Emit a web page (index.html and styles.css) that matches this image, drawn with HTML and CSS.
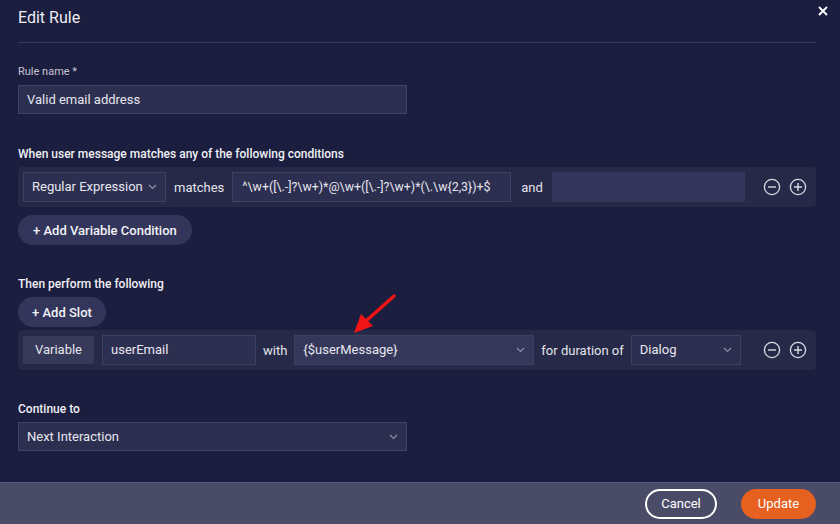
FILE: index.html
```html
<!DOCTYPE html>
<html>
<head>
<meta charset="utf-8">
<link rel="stylesheet" href="styles.css">
</head>
<body>
<div class="dialog">
  <div class="content">
    <header class="header">
      <h1 class="title">Edit Rule</h1>
      <button class="close" aria-label="Close">
        <svg width="10" height="10" viewBox="0 0 10 10"><path d="M1 1L9 9M9 1L1 9" stroke="#fff" stroke-width="1.8" fill="none"/></svg>
      </button>
    </header>

    <label class="field-label">Rule name *</label>
    <div class="input wide name-input">Valid email address</div>

    <h2 class="section-label first">When user message matches any of the following conditions</h2>
    <div class="row">
      <div class="select sel-type"><span>Regular Expression</span><svg class="chev" width="9" height="6" viewBox="0 0 9 6"><path d="M1 1L4.5 4.5L8 1" stroke="#8d8fa9" stroke-width="1.2" fill="none"/></svg></div>
      <span class="word">matches</span>
      <div class="input regex">^\w+([\.-]?\w+)*@\w+([\.-]?\w+)*(\.\w{2,3})+$</div>
      <span class="word and">and</span>
      <div class="input empty"></div>
      <div class="icons">
        <svg width="18" height="18" viewBox="0 0 18 18"><circle cx="9" cy="9" r="7.6" stroke="#dcdce4" stroke-width="1.3" fill="none"/><path d="M5 9H13" stroke="#dcdce4" stroke-width="1.4"/></svg>
        <svg width="18" height="18" viewBox="0 0 18 18"><circle cx="9" cy="9" r="7.6" stroke="#dcdce4" stroke-width="1.3" fill="none"/><path d="M5 9H13M9 5V13" stroke="#dcdce4" stroke-width="1.4"/></svg>
      </div>
    </div>
    <button class="pill add-cond">+ Add Variable Condition</button>

    <h2 class="section-label">Then perform the following</h2>
    <button class="pill add-slot">+ Add Slot</button>
    <div class="row slot-row">
      <div class="tag">Variable</div>
      <div class="input name">userEmail</div>
      <span class="word">with</span>
      <div class="select sel-with disabled"><span>{$userMessage}</span><svg class="chev" width="9" height="6" viewBox="0 0 9 6"><path d="M1 1L4.5 4.5L8 1" stroke="#8d8fa9" stroke-width="1.2" fill="none"/></svg></div>
      <span class="word">for duration of</span>
      <div class="select sel-dur"><span>Dialog</span><svg class="chev" width="9" height="6" viewBox="0 0 9 6"><path d="M1 1L4.5 4.5L8 1" stroke="#8d8fa9" stroke-width="1.2" fill="none"/></svg></div>
      <div class="icons">
        <svg width="18" height="18" viewBox="0 0 18 18"><circle cx="9" cy="9" r="7.6" stroke="#dcdce4" stroke-width="1.3" fill="none"/><path d="M5 9H13" stroke="#dcdce4" stroke-width="1.4"/></svg>
        <svg width="18" height="18" viewBox="0 0 18 18"><circle cx="9" cy="9" r="7.6" stroke="#dcdce4" stroke-width="1.3" fill="none"/><path d="M5 9H13M9 5V13" stroke="#dcdce4" stroke-width="1.4"/></svg>
      </div>
      <svg class="arrow" width="50" height="46" viewBox="0 0 50 46"><path d="M45 3L17 28" stroke="#f01414" stroke-width="3.4" stroke-linecap="round"/><path d="M5 40L12 21L24 33Z" fill="#f01414"/></svg>
    </div>

    <h2 class="section-label">Continue to</h2>
    <div class="select wide"><span>Next Interaction</span><svg class="chev" width="9" height="6" viewBox="0 0 9 6"><path d="M1 1L4.5 4.5L8 1" stroke="#8d8fa9" stroke-width="1.2" fill="none"/></svg></div>
  </div>

  <footer class="footer">
    <button class="btn cancel">Cancel</button>
    <button class="btn update">Update</button>
  </footer>
</div>
</body>
</html>
```

FILE: styles.css
```css
* { box-sizing: border-box; }
html, body { margin: 0; height: 100%; }
body {
  background: #1b1e3f;
  font-family: Roboto, "Liberation Sans", sans-serif;
  color: #e4e4ec;
}
.dialog {
  height: 100vh;
  display: flex;
  flex-direction: column;
}
.content {
  flex: 1;
  padding: 0 24px 0 18px;
  display: flex;
  flex-direction: column;
  align-items: flex-start;
}
.header {
  width: 100%;
  padding: 8px 0 14px;
  border-bottom: 1px solid #383b5b;
  position: relative;
}
.title {
  margin: 0;
  font-size: 16px;
  line-height: 20px;
  font-weight: 400;
  color: #ececf2;
}
.close {
  position: absolute;
  right: -16px;
  top: 2px;
  background: none;
  border: 0;
  padding: 4px;
  line-height: 0;
}
.field-label {
  margin-top: 22px;
  font-size: 11px;
  line-height: 14px;
  color: #c3c4d2;
}
.input, .select {
  height: 30px;
  background: #2d2f50;
  border: 1px solid #3e4163;
  font-size: 13px;
  line-height: 28px;
  color: #e6e6ee;
  padding: 0 8px;
  white-space: nowrap;
  overflow: hidden;
}
.wide { width: 389px; margin-top: 5px; height: 29px; line-height: 27px; }
.wide.name-input { margin-top: 6px; }
.section-label {
  margin: 31px 0 0;
  font-size: 12px;
  line-height: 16px;
  font-weight: 500;
  color: #f0f0f5;
}
.section-label.first { margin-top: 32px; }
.row {
  width: 100%;
  margin-top: 5px;
  background: #262947;
  border-radius: 4px;
  padding: 5px;
  display: flex;
  align-items: center;
  position: relative;
}
.word {
  font-size: 13px;
  color: #e4e4ec;
  padding: 0 7px;
}
.row > .word:nth-child(2) { padding: 0 8px; }
.row > .word.and { padding: 0 6px 0 10px; }
.select {
  display: flex;
  align-items: center;
  justify-content: space-between;
}
.chev { flex: none; }
.sel-type { width: 143px; }
.regex { width: 279px; font-size: 12.4px; padding-left: 9px; }
.empty { width: 193px; background: #33355a; border-color: #33355a; margin-left: 3px; }
.icons {
  margin-left: auto;
  display: flex;
  gap: 8px;
  padding-right: 4px;
}
.pill {
  margin-top: 8px;
  height: 30px;
  border: 0;
  border-radius: 15px;
  background: #33365a;
  color: #f2f2f7;
  font-family: inherit;
  font-size: 13px;
  font-weight: 500;
  padding: 0 15px;
}
.add-slot { margin-top: 5px; padding: 0 14px; }
.slot-row { margin-top: 3px; }
.tag {
  width: 71px;
  height: 28px;
  background: #363958;
  font-size: 13px;
  line-height: 28px;
  text-align: center;
  color: #e4e4ec;
}
.name { width: 154px; margin-left: 8px; }
.sel-with { width: 240px; background: #34375a; }
.sel-dur { width: 110px; }
.arrow {
  position: absolute;
  left: 331px;
  top: -37px;
}
.footer {
  height: 42px;
  background: #4a4c67;
  border-top: 1px solid #55587a;
  display: flex;
  justify-content: flex-end;
  align-items: center;
  gap: 24px;
  padding-right: 24px;
}
.btn {
  height: 30px;
  border-radius: 15px;
  font-family: inherit;
  font-size: 13px;
  color: #fff;
  padding: 0;
}
.cancel {
  width: 72px;
  background: transparent;
  border: 2px solid #fff;
}
.update {
  width: 75px;
  background: #e6601f;
  border: 0;
}
```
